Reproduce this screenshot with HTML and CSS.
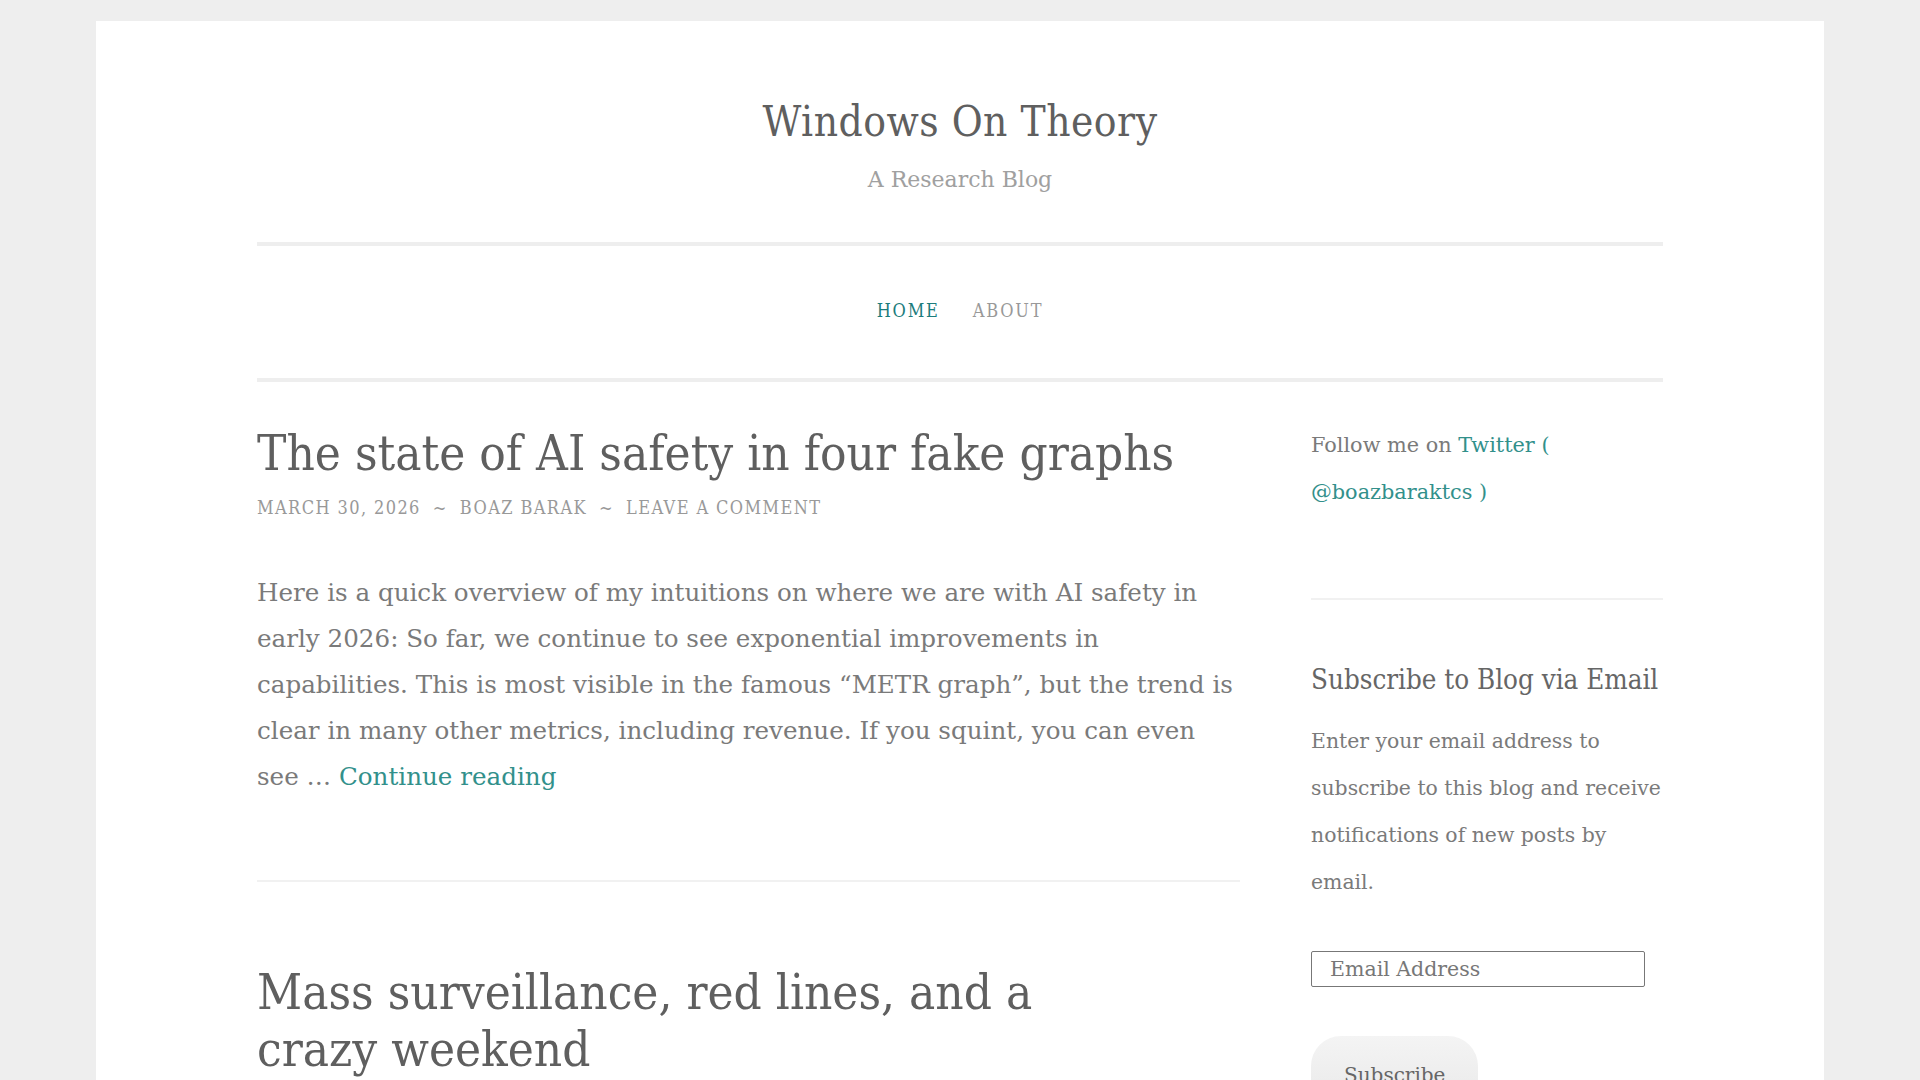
FILE: index.html
```html
<!DOCTYPE html>
<html lang="en">
<head>
<meta charset="utf-8">
<title>Windows On Theory</title>
<link rel="stylesheet" href="styles.css">
</head>
<body>
<div class="page">
  <header class="site-header">
    <h1 class="site-title">Windows On Theory</h1>
    <p class="site-description">A Research Blog</p>
  </header>
  <nav class="main-nav">
    <a class="nav-item current" href="#">Home</a>
    <a class="nav-item" href="#">About</a>
  </nav>
  <div class="content">
    <main class="posts">
      <article class="post">
        <h2 class="entry-title">The state of AI safety in four fake graphs</h2>
        <div class="entry-meta">
          <span>March 30, 2026</span><span class="sep">~</span><span>Boaz Barak</span><span class="sep">~</span><span>Leave a comment</span>
        </div>
        <p class="entry-summary">Here is a quick overview of my intuitions on where we are with AI safety in early 2026: So far, we continue to see exponential improvements in capabilities. This is most visible in the famous “METR graph”, but the trend is clear in many other metrics, including revenue. If you squint, you can even see … <a href="#" class="more">Continue reading</a></p>
      </article>
      <article class="post">
        <h2 class="entry-title">Mass surveillance, red lines, and a crazy weekend</h2>
      </article>
    </main>
    <aside class="sidebar">
      <section class="widget widget-follow">
        <p>Follow me on <a href="#">Twitter ( @boazbaraktcs )</a></p>
      </section>
      <section class="widget widget-subscribe">
        <h3 class="widget-title">Subscribe to Blog via Email</h3>
        <p>Enter your email address to subscribe to this blog and receive notifications of new posts by email.</p>
        <input class="email" type="email" placeholder="Email Address">
        <button class="subscribe" type="button">Subscribe</button>
      </section>
    </aside>
  </div>
</div>
</body>
</html>
```

FILE: styles.css
```css
html, body {
  margin: 0;
  padding: 0;
}
body {
  background: #eeeeee;
  padding-top: 21px;
  font-family: "DejaVu Serif", "Liberation Serif", serif;
  color: #777;
}
.page {
  width: 1728px;
  margin: 0 auto;
  background: #fff;
  box-sizing: border-box;
  padding: 0 161px;
  min-height: 1100px;
}
a {
  color: #32908b;
  text-decoration: none;
}
.site-header {
  text-align: center;
  padding-top: 76px;
  padding-bottom: 47px;
  border-bottom: 4px solid #eeeeee;
}
.site-title {
  margin: 0;
  font-size: 42px;
  line-height: 50px;
  font-weight: normal;
  font-stretch: condensed;
  color: #5f5f5f;
  letter-spacing: 0.5px;
}
.site-description {
  margin: 18px 0 0;
  font-size: 22px;
  line-height: 30px;
  color: #a0a0a0;
}
.main-nav {
  display: flex;
  justify-content: center;
  gap: 33px;
  padding: 52px 0 54px;
  border-bottom: 4px solid #eeeeee;
}
.nav-item {
  font-size: 18px;
  line-height: 26px;
  font-stretch: condensed;
  text-transform: uppercase;
  letter-spacing: 1.8px;
  color: #999;
}
.nav-item.current {
  color: #1c7c7c;
}
.content {
  display: grid;
  grid-template-columns: 983px 352px;
  column-gap: 71px;
}
.post {
  padding: 43px 0 80px;
  border-bottom: 2px solid #f1f1f1;
}
.post + .post {
  padding-top: 82px;
  border-bottom: none;
}
.entry-title {
  margin: 0;
  font-size: 49px;
  line-height: 57px;
  font-weight: normal;
  font-stretch: condensed;
  color: #5f5f5f;
  text-wrap: pretty;
}
.entry-meta {
  margin-top: 13px;
  font-size: 18px;
  line-height: 26px;
  font-stretch: condensed;
  text-transform: uppercase;
  letter-spacing: 1.4px;
  color: #999;
}
.entry-meta .sep {
  margin: 0 12px;
}
.entry-summary {
  margin: 49px 0 0;
  font-size: 24.6px;
  line-height: 46px;
  color: #7a7a7a;
}
.sidebar {
  padding-top: 40px;
}
.widget p {
  margin: 0;
  font-size: 20.4px;
  line-height: 47px;
  color: #7a7a7a;
}
.widget-follow p {
  font-size: 20.8px;
}
.widget-follow {
  padding-bottom: 82px;
  border-bottom: 2px solid #f1f1f1;
}
.widget-subscribe {
  padding-top: 59px;
}
.widget-title {
  margin: 0 0 19px;
  font-size: 27.5px;
  line-height: 40px;
  font-weight: normal;
  font-stretch: condensed;
  color: #666;
}
.email {
  display: block;
  margin-top: 45px;
  width: 334px;
  height: 36px;
  box-sizing: border-box;
  border: 1px solid #777;
  border-radius: 2px;
  padding: 0 18px;
  font-family: "DejaVu Serif", serif;
  font-size: 20.5px;
  color: #777;
  background: #fff;
}
.email::placeholder {
  color: #777;
}
.subscribe {
  display: block;
  margin-top: 49px;
  height: 78px;
  padding: 0 33px;
  border: none;
  border-radius: 30px;
  background: linear-gradient(#f4f4f4, #e8e8e8);
  font-family: "DejaVu Serif", serif;
  font-size: 20px;
  color: #666;
}
```
